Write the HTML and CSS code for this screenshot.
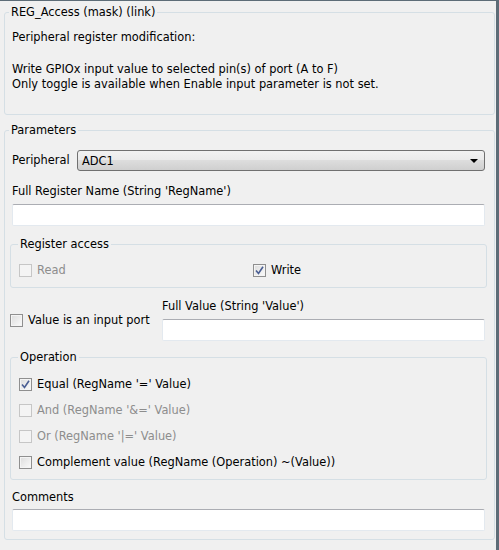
FILE: index.html
```html
<!DOCTYPE html>
<html>
<head>
<meta charset="utf-8">
<link rel="stylesheet" href="styles.css">
</head>
<body>
<div class="window">
  <fieldset class="group desc">
    <legend>REG_Access (mask) (link)</legend>
    <p class="line">Peripheral register modification:</p>
    <p class="line gap">Write GPIOx input value to selected pin(s) of port (A to F)</p>
    <p class="line">Only toggle is available when Enable input parameter is not set.</p>
  </fieldset>

  <fieldset class="group params">
    <legend>Parameters</legend>
    <div class="row periph">
      <span class="label">Peripheral</span>
      <div class="select"><span>ADC1</span><span class="arrow"></span></div>
    </div>
    <div class="label block first">Full Register Name (String 'RegName')</div>
    <div class="input"></div>

    <fieldset class="sub access">
      <legend>Register access</legend>
      <div class="cols">
        <label class="check disabled"><span class="box"></span>Read</label>
        <label class="check"><span class="box checked"><svg width="9" height="9" viewBox="0 0 9 9"><path d="M1 4.5 L3.5 7.5 L8 0.8" fill="none" stroke="#4a5e93" stroke-width="1.6"/></svg></span>Write</label>
      </div>
    </fieldset>

    <div class="value-row">
      <label class="check"><span class="box"></span>Value is an input port</label>
      <div class="value-col">
        <div class="label block">Full Value (String 'Value')</div>
        <div class="input short"></div>
      </div>
    </div>

    <fieldset class="sub oper">
      <legend>Operation</legend>
      <label class="check"><span class="box checked"><svg width="9" height="9" viewBox="0 0 9 9"><path d="M1 4.5 L3.5 7.5 L8 0.8" fill="none" stroke="#4a5e93" stroke-width="1.6"/></svg></span>Equal (RegName '=' Value)</label>
      <label class="check disabled"><span class="box"></span>And (RegName '&amp;=' Value)</label>
      <label class="check disabled"><span class="box"></span>Or (RegName '|=' Value)</label>
      <label class="check"><span class="box"></span>Complement value (RegName (Operation) ~(Value))</label>
    </fieldset>

    <div class="label block comments">Comments</div>
    <div class="input tall"></div>
  </fieldset>
</div>
</body>
</html>
```

FILE: styles.css
```css
html, body {
  margin: 0;
  padding: 0;
  background: #f0f0f0;
}
.window {
  width: 499px;
  height: 550px;
  border-top: 1px solid #5d6c77;
  border-right: 3px solid #5d6c77;
  background: #f0f0f0;
  padding-top: 4px;
  box-sizing: border-box;
  font-family: "DejaVu Sans", sans-serif;
  font-size: 11.4px;
  color: #000;
}
.group {
  margin: 0 0 0 4px;
  width: 491px;
  box-sizing: border-box;
  border: 1px solid #d5dfe5;
  border-radius: 3px;
  padding: 0 9px 0 7px;
}
legend {
  padding: 0 2px;
  margin-left: -3px;
  line-height: 15px;
  height: 15px;
}
.desc {
  padding-top: 10px;
  padding-bottom: 22px;
}
.line {
  margin: 0;
  line-height: 15px;
  height: 15px;
  white-space: nowrap;
}
.gap { margin-top: 17px; }
.params {
  margin-top: 8px;
  padding-top: 12px;
  padding-bottom: 8px;
}
.row { display: flex; align-items: center; }
.periph { height: 21px; }
.periph .label { width: 65px; }
.select {
  flex: 1;
  height: 21px;
  box-sizing: border-box;
  border: 1px solid #707070;
  border-radius: 3px;
  background: linear-gradient(#f2f2f2 0%, #ebebeb 45%, #dddddd 50%, #cfcfcf 100%);
  display: flex;
  align-items: center;
  justify-content: space-between;
  padding: 0 6px 0 4px;
}
.arrow {
  width: 0; height: 0;
  border-left: 4px solid transparent;
  border-right: 4px solid transparent;
  border-top: 4px solid #000;
}
.label { line-height: 15px; white-space: nowrap; }
.block { margin-top: 12px; margin-bottom: 5px; }
.block.first { margin-top: 13px; }
.input {
  height: 22px;
  box-sizing: border-box;
  background: #fff;
  border: 1px solid #e3e9ef;
  border-top-color: #abadb3;
  border-radius: 2px;
}
.sub {
  margin: 11px -2px 0 -2px;
  border: 1px solid #d5dfe5;
  border-radius: 3px;
  padding: 10px 8px 9px 8px;
}
.sub legend { margin-left: -1px; }
.cols { display: grid; grid-template-columns: 234px 1fr; }
.check {
  display: flex;
  align-items: center;
  height: 16px;
  line-height: 15px;
  white-space: nowrap;
}
.box {
  flex: none;
  width: 13px; height: 13px;
  box-sizing: border-box;
  border: 1px solid #8f8f8f;
  background: linear-gradient(135deg, #dcdcdc, #fbfbfb);
  box-shadow: inset 0 0 0 1px #f4f4f4;
  margin-right: 5px;
  display: flex; align-items: center; justify-content: center;
}
.disabled { color: #8d8d8d; }
.disabled .box { border-color: #c6c6c6; background: #f4f4f4; }
.value-row {
  display: flex;
  align-items: center;
  margin: 11px 0 0 -2px;
}
.value-row .check { width: 152px; }
.value-col { flex: 1; }
.value-col .block { margin-top: 0; }
.oper { margin-top: 9px; padding-top: 11px; }
.oper .check + .check { margin-top: 10px; }
.comments { margin-top: 10px; margin-bottom: 4px; }
.input.tall { height: 22px; }
```
